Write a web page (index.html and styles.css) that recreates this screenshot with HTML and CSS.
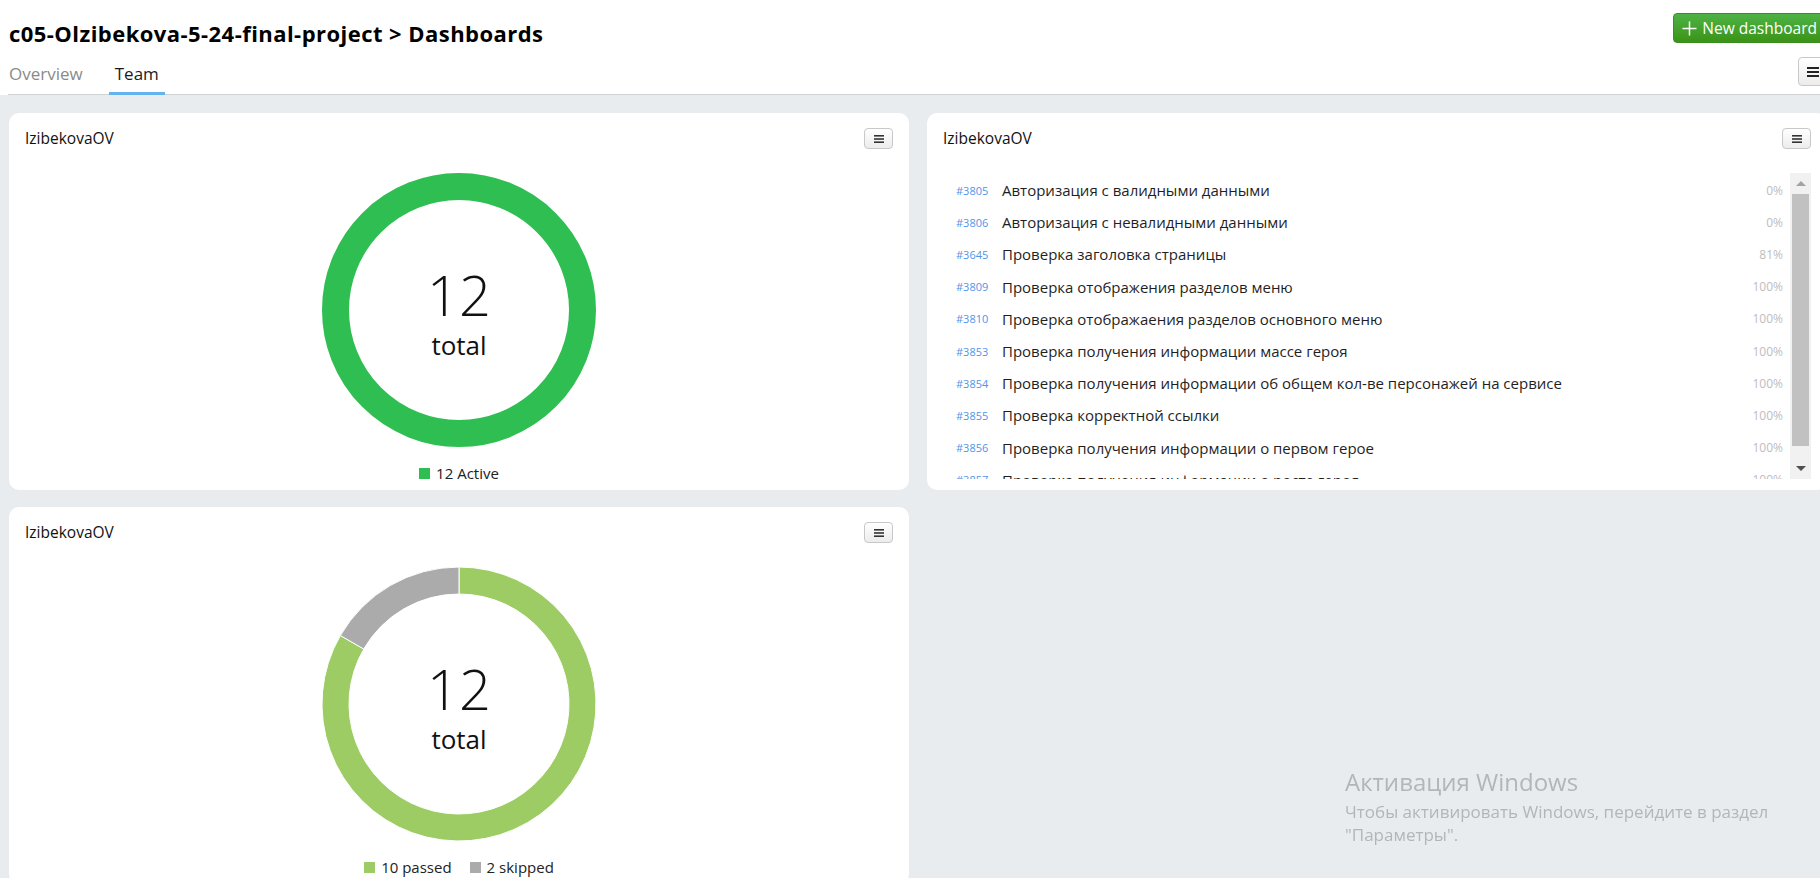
FILE: index.html
```html
<!DOCTYPE html>
<html lang="ru">
<head>
<meta charset="utf-8">
<title>Dashboards</title>
<link rel="stylesheet" href="styles.css">
</head>
<body>
<div class="page">
  <header class="header">
    <div class="header-top">
      <h1 class="title">c05-Olzibekova-5-24-final-project &gt; Dashboards</h1>
      <button class="btn-new" type="button">
        <svg class="plus" width="15" height="15" viewBox="0 0 15 15"><path d="M7.5 0.5v14M0.5 7.5h14" stroke="#fff" stroke-width="1.5" fill="none"/></svg>
        <span>New dashboard</span>
      </button>
    </div>
    <div class="header-tabs">
      <nav class="tabs">
        <a class="tab">Overview</a>
        <a class="tab tab-active">Team</a>
      </nav>
      <button class="btn-menu btn-menu-lg" type="button">
        <svg width="12" height="10" viewBox="0 0 12 10"><rect x="0" y="0" width="12" height="2" fill="#222"/><rect x="0" y="4" width="12" height="2" fill="#222"/><rect x="0" y="8" width="12" height="2" fill="#222"/></svg>
      </button>
    </div>
  </header>

  <main class="grid">
    <section class="card">
      <div class="card-head">
        <h2 class="card-title">IzibekovaOV</h2>
        <button class="btn-menu" type="button">
          <svg width="10" height="8" viewBox="0 0 10 8"><rect x="0" y="0" width="10" height="1.6" fill="#333"/><rect x="0" y="3.2" width="10" height="1.6" fill="#333"/><rect x="0" y="6.4" width="10" height="1.6" fill="#333"/></svg>
        </button>
      </div>
      <div class="chart">
        <div class="donut-wrap">
          <svg class="donut" width="274" height="274" viewBox="0 0 274 274">
            <circle cx="137" cy="137" r="123.5" fill="none" stroke="#2ebe51" stroke-width="27"/>
          </svg>
          <div class="donut-center">
            <span class="donut-num">12</span>
            <span class="donut-lbl">total</span>
          </div>
        </div>
        <div class="legend">
          <span class="legend-item"><i class="sw sw-active"></i>12 Active</span>
        </div>
      </div>
    </section>

    <section class="card">
      <div class="card-head">
        <h2 class="card-title">IzibekovaOV</h2>
        <button class="btn-menu" type="button">
          <svg width="10" height="8" viewBox="0 0 10 8"><rect x="0" y="0" width="10" height="1.6" fill="#333"/><rect x="0" y="3.2" width="10" height="1.6" fill="#333"/><rect x="0" y="6.4" width="10" height="1.6" fill="#333"/></svg>
        </button>
      </div>
      <div class="tests">
        <ul class="test-list">
          <li class="test"><span class="test-id">#3805</span><span class="test-name">Авторизация с валидными данными</span><span class="test-pct">0%</span></li>
          <li class="test"><span class="test-id">#3806</span><span class="test-name">Авторизация с невалидными данными</span><span class="test-pct">0%</span></li>
          <li class="test"><span class="test-id">#3645</span><span class="test-name">Проверка заголовка страницы</span><span class="test-pct">81%</span></li>
          <li class="test"><span class="test-id">#3809</span><span class="test-name">Проверка отображения разделов меню</span><span class="test-pct">100%</span></li>
          <li class="test"><span class="test-id">#3810</span><span class="test-name">Проверка отображаения разделов основного меню</span><span class="test-pct">100%</span></li>
          <li class="test"><span class="test-id">#3853</span><span class="test-name">Проверка получения информации массе героя</span><span class="test-pct">100%</span></li>
          <li class="test"><span class="test-id">#3854</span><span class="test-name">Проверка получения информации об общем кол-ве персонажей на сервисе</span><span class="test-pct">100%</span></li>
          <li class="test"><span class="test-id">#3855</span><span class="test-name">Проверка корректной ссылки</span><span class="test-pct">100%</span></li>
          <li class="test"><span class="test-id">#3856</span><span class="test-name">Проверка получения информации о первом герое</span><span class="test-pct">100%</span></li>
          <li class="test"><span class="test-id">#3857</span><span class="test-name">Проверка получения информации о росте героя</span><span class="test-pct">100%</span></li>
        </ul>
        <div class="scrollbar">
          <span class="sb-btn"><span class="tri-up"></span></span>
          <span class="sb-thumb"></span>
          <span class="sb-fill"></span>
          <span class="sb-btn"><span class="tri-down"></span></span>
        </div>
      </div>
    </section>

    <section class="card">
      <div class="card-head">
        <h2 class="card-title">IzibekovaOV</h2>
        <button class="btn-menu" type="button">
          <svg width="10" height="8" viewBox="0 0 10 8"><rect x="0" y="0" width="10" height="1.6" fill="#333"/><rect x="0" y="3.2" width="10" height="1.6" fill="#333"/><rect x="0" y="6.4" width="10" height="1.6" fill="#333"/></svg>
        </button>
      </div>
      <div class="chart">
        <div class="donut-wrap">
          <svg class="donut" width="274" height="274" viewBox="0 0 274 274">
            <path d="M137,0 A137,137 0 1 1 18.35,68.5 L41.74,82 A110,110 0 1 0 137,27 Z" fill="#9ccc63" stroke="#fff" stroke-width="1"/>
            <path d="M18.35,68.5 A137,137 0 0 1 137,0 L137,27 A110,110 0 0 0 41.74,82 Z" fill="#ababab" stroke="#fff" stroke-width="1"/>
          </svg>
          <div class="donut-center">
            <span class="donut-num">12</span>
            <span class="donut-lbl">total</span>
          </div>
        </div>
        <div class="legend">
          <span class="legend-item"><i class="sw sw-passed"></i>10 passed</span>
          <span class="legend-item"><i class="sw sw-skipped"></i>2 skipped</span>
        </div>
      </div>
    </section>
  </main>
</div>

<div class="watermark">
  <div class="wm-title">Активация Windows</div>
  <div class="wm-text">Чтобы активировать Windows, перейдите в раздел<br>"Параметры".</div>
</div>
</body>
</html>
```

FILE: styles.css
```css
html, body {
  margin: 0;
  padding: 0;
  overflow: hidden;
}

body {
  background: #e9ecef;
  font-family: "Segoe UI", "Open Sans", "Noto Sans", sans-serif;
  color: #111;
}

.page {
  width: 1836px;
}

/* Header */
.header {
  background: #fff;
  padding: 0 8px;
}

.header-top {
  display: flex;
  justify-content: space-between;
  align-items: flex-start;
  padding-top: 13px;
  height: 30px;
}

.title {
  margin: 5px 0 0 1px;
  font-size: 22px;
  letter-spacing: 0.45px;
  line-height: 30px;
  font-weight: 700;
  color: #000;
}

.btn-new {
  display: inline-flex;
  align-items: center;
  gap: 5px;
  height: 30px;
  box-sizing: border-box;
  padding: 0 10px 0 8px;
  border: 1px solid #3b8f1f;
  border-radius: 4px;
  background: linear-gradient(#4db345, #3b9317);
  color: #fff;
  font-family: inherit;
  font-size: 15.5px;
  line-height: 20px;
  cursor: pointer;
}

.plus {
  display: block;
}

.header-tabs {
  display: flex;
  justify-content: space-between;
  align-items: flex-start;
  height: 51px;
  border-bottom: 1px solid #cfd2d5;
}

.tabs {
  display: flex;
  gap: 20px;
  margin-left: -5px;
  align-self: flex-end;
}

.tab {
  padding: 0 6px 6px;
  border-bottom: 3px solid transparent;
  font-size: 17px;
  line-height: 24px;
  color: #8a8a8a;
  margin-bottom: -1px;
}

.tab-active {
  color: #1a1a1a;
  border-bottom-color: #63b3ed;
}

.btn-menu {
  display: flex;
  align-items: center;
  justify-content: center;
  width: 29px;
  height: 21px;
  padding: 0;
  box-sizing: border-box;
  border: 1px solid #c6c8ca;
  border-radius: 4px;
  background: linear-gradient(#ffffff, #ececec);
  cursor: pointer;
}

.btn-menu-lg {
  width: 30px;
  height: 29px;
  margin-top: 14px;
}

/* Grid */
.grid {
  display: grid;
  grid-template-columns: 900px 900px;
  gap: 17px 18px;
  padding: 18px 0 0 9px;
}

.card {
  background: #fff;
  border-radius: 10px;
  height: 377px;
  display: flex;
  flex-direction: column;
}

.card-head {
  display: flex;
  justify-content: space-between;
  align-items: center;
  padding: 15px 16px 0;
  height: 21px;
}

.card-title {
  margin: 0;
  font-size: 15.5px;
  font-weight: 400;
  color: #111;
  line-height: 21px;
}

/* Donut */
.chart {
  display: flex;
  flex-direction: column;
  align-items: center;
  padding-top: 24px;
}

.donut-wrap {
  position: relative;
  width: 274px;
  height: 274px;
}

.donut {
  display: block;
}

.donut-center {
  position: absolute;
  left: 0;
  right: 0;
  top: 93px;
  display: flex;
  flex-direction: column;
  align-items: center;
  color: #111;
}

.donut-num {
  font-size: 56px;
  font-weight: 350;
  line-height: 56px;
}

.donut-lbl {
  font-size: 26px;
  line-height: 30px;
  margin-top: 8px;
}

.legend {
  display: flex;
  gap: 18px;
  margin-top: 16px;
  font-size: 15px;
  line-height: 20px;
  color: #222;
}

.legend-item {
  display: flex;
  align-items: center;
  gap: 6px;
}

.sw {
  display: inline-block;
  width: 11px;
  height: 11px;
}

.sw-active { background: #2ebe51; }
.sw-passed { background: #9ccc63; }
.sw-skipped { background: #ababab; }

/* Test list */
.tests {
  display: flex;
  height: 306px;
  margin: 24px 16px 0 16px;
}

.test-list {
  flex: 1;
  margin: 0;
  padding: 1px 0 0;
  list-style: none;
  overflow: hidden;
}

.test {
  display: flex;
  align-items: center;
  height: 32.2px;
  padding: 0 7px 0 13px;
}

.test-id {
  flex: none;
  width: 46px;
  font-size: 11px;
  color: #4f95e8;
}

.test-name {
  flex: 1;
  font-size: 15px;
  color: #1f1f1f;
  white-space: nowrap;
}

.test-pct {
  flex: none;
  font-size: 12px;
  color: #bdbdbd;
}

.scrollbar {
  flex: none;
  width: 21px;
  background: #f1f1f1;
  display: flex;
  flex-direction: column;
  align-items: center;
}

.sb-btn {
  flex: none;
  width: 100%;
  height: 21px;
  display: flex;
  align-items: center;
  justify-content: center;
}

.tri-up {
  width: 0;
  height: 0;
  border-left: 5px solid transparent;
  border-right: 5px solid transparent;
  border-bottom: 5px solid #a3a3a3;
}

.tri-down {
  width: 0;
  height: 0;
  border-left: 5px solid transparent;
  border-right: 5px solid transparent;
  border-top: 5px solid #505050;
}

.sb-thumb {
  flex: none;
  width: 17px;
  height: 252px;
  background: #c1c1c1;
}

.sb-fill {
  flex: 1;
}

/* Windows watermark overlay */
.watermark {
  position: fixed;
  left: 1345px;
  top: 767px;
  color: #b3b6b9;
  pointer-events: none;
}

.wm-title {
  font-size: 24px;
  line-height: 30px;
}

.wm-text {
  margin-top: 3px;
  font-size: 17px;
  line-height: 23px;
}
```
